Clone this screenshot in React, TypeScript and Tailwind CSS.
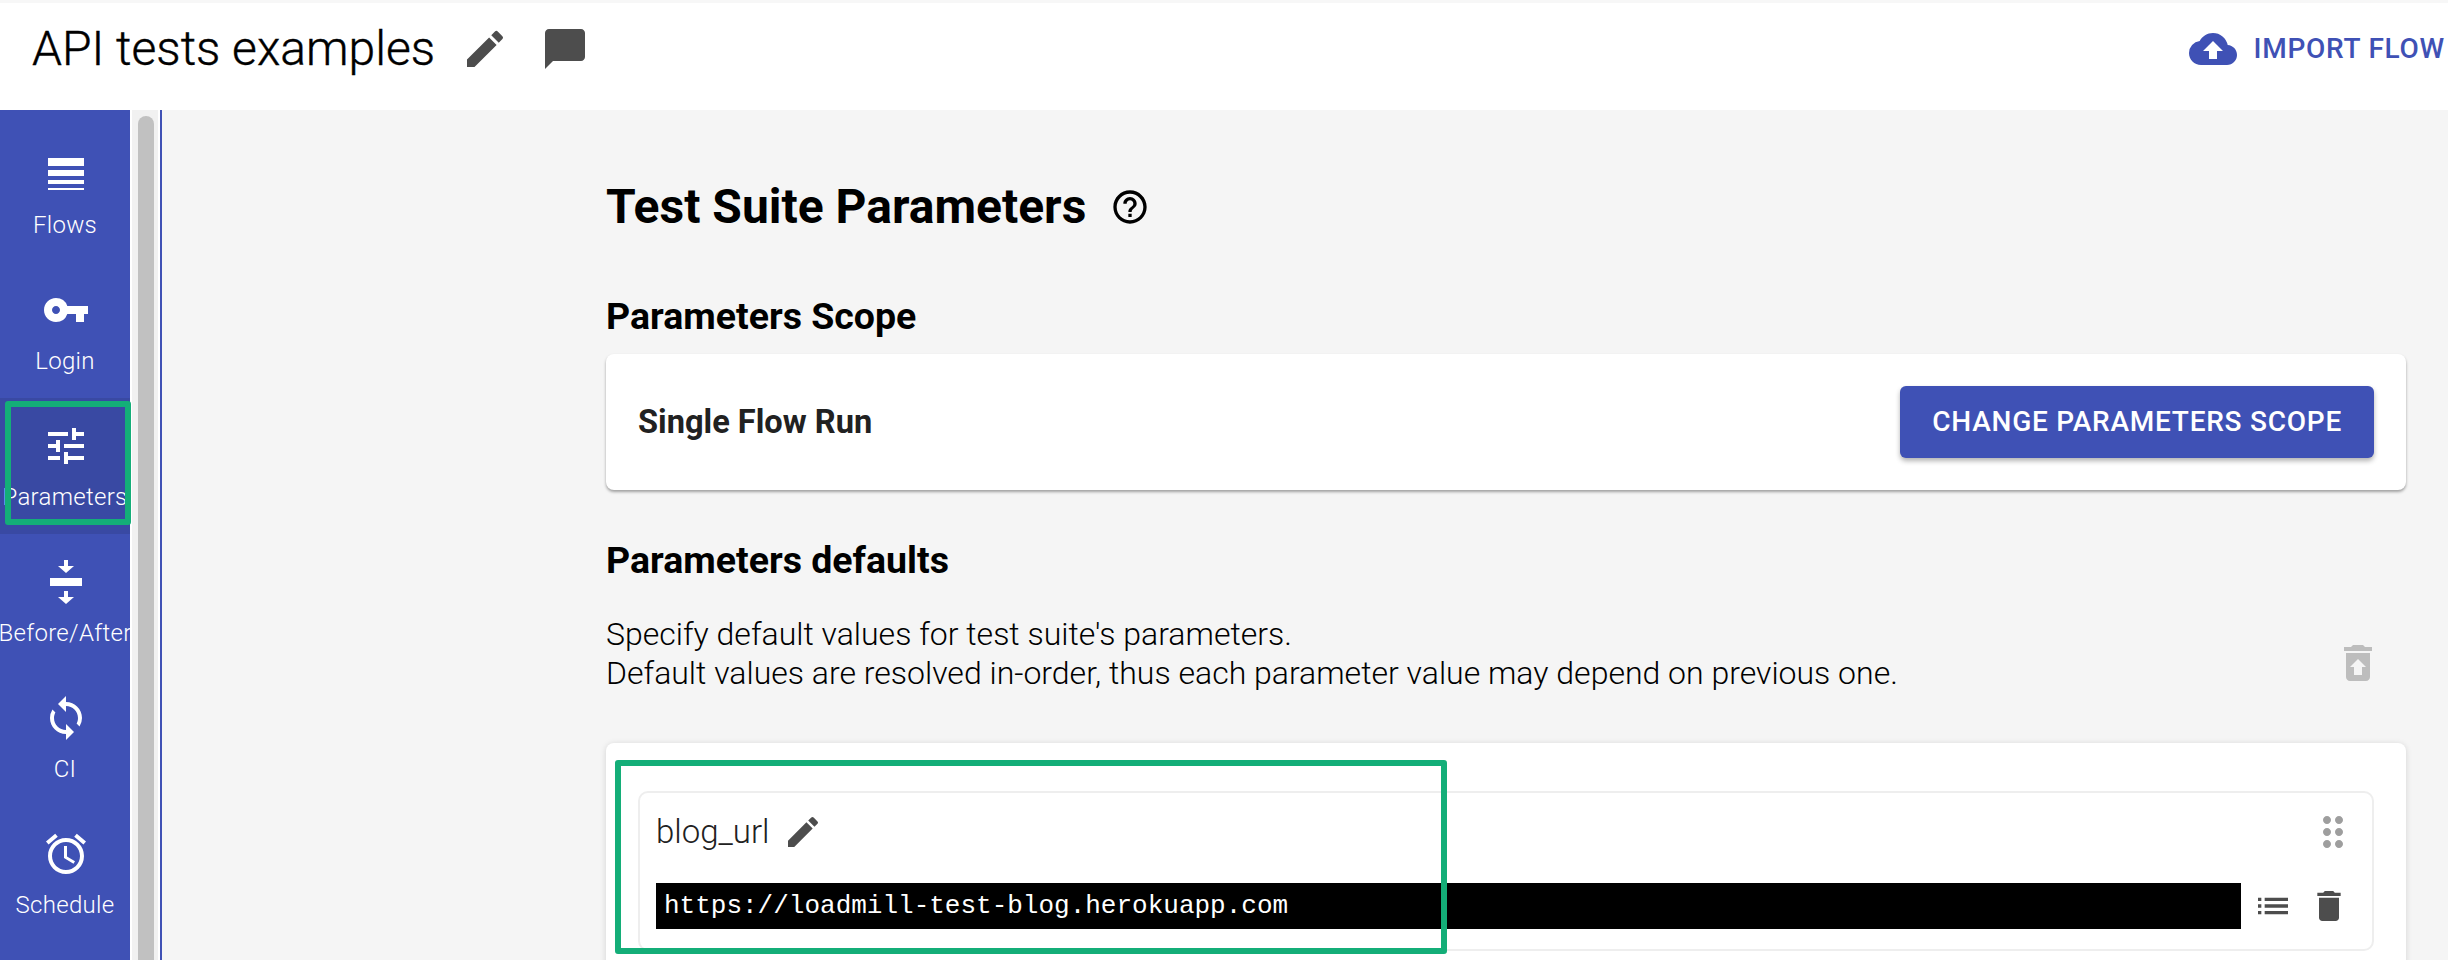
import type { ReactNode } from 'react';
import {
  MdAccessAlarm,
  MdChatBubble,
  MdCloudUpload,
  MdDelete,
  MdDragIndicator,
  MdEdit,
  MdHelpOutline,
  MdLineWeight,
  MdList,
  MdRestoreFromTrash,
  MdSync,
  MdTune,
  MdVpnKey,
} from 'react-icons/md';

function BeforeAfterIcon() {
  return (
    <svg viewBox="0 0 24 24" className="w-12 h-12 fill-white">
      <path d="M11 1h2v3h3l-4 3.5L8 4h3zM4 10h16v4H4zM11 16.5h2v3h3l-4 3.5-4-3.5h3z" />
    </svg>
  );
}

const navItems: { label: string; icon: ReactNode; active?: boolean }[] = [
  { label: 'Flows', icon: <MdLineWeight size={48} /> },
  { label: 'Login', icon: <MdVpnKey size={48} /> },
  { label: 'Parameters', icon: <MdTune size={48} />, active: true },
  { label: 'Before/After', icon: <BeforeAfterIcon /> },
  { label: 'CI', icon: <MdSync size={48} /> },
  { label: 'Schedule', icon: <MdAccessAlarm size={48} /> },
];

function Sidebar() {
  return (
    <nav className="relative w-[130px] shrink-0 bg-[#3f51b5] pt-4 text-white">
      {navItems.map((item) => (
        <div
          key={item.label}
          className={`flex h-[136px] flex-col items-center overflow-hidden pt-6 ${item.active ? 'bg-[#3949a3]' : ''}`}
        >
          <div className="h-12 w-12 shrink-0 translate-x-px">{item.icon}</div>
          <span className="mt-[11px] whitespace-nowrap text-[24px] leading-[32px] font-light tracking-[0.3px]">{item.label}</span>
        </div>
      ))}
      {/* Annotation around the active tab */}
      <div className="absolute left-[5px] top-[291px] h-[124px] w-[126px] rounded-[3px] border-[6px] border-[#14ae78]" />
    </nav>
  );
}

function ParameterCard() {
  return (
    <div className="relative mt-[50px] rounded-t-lg bg-white px-[32px] pt-[48px] pb-8 shadow-[0_1px_6px_rgba(0,0,0,0.14)]">
      <div className="rounded-[10px] border-2 border-[#eeeeee] pb-5 pl-4 pr-[23px]">
        <div className="flex h-[90px] items-center justify-between pb-3">
          <div className="flex items-center">
            <span className="text-[33px] font-light text-[#212121]">blog_url</span>
            <MdEdit size={40} className="ml-[14px] text-[#4d4d4d]" />
          </div>
          <MdDragIndicator size={48} className="-mr-[8px] text-[#9e9e9e]" />
        </div>
        <div className="flex items-center">
          <div className="flex h-[46px] flex-1 items-center bg-black pl-2 font-['Liberation_Mono',monospace] text-[26px] text-white">
            https://loadmill-test-blog.herokuapp.com
          </div>
          <MdList size={40} className="ml-3 text-[#4d4d4d]" />
          <MdDelete size={40} className="ml-4 text-[#4d4d4d]" />
        </div>
      </div>
      {/* Annotation around the parameter name and value */}
      <div className="absolute left-[9px] top-[17px] h-[194px] w-[832px] rounded-[3px] border-[6px] border-[#14ae78]" />
    </div>
  );
}

export default function App() {
  return (
    <div className="flex h-[960px] flex-col overflow-hidden bg-white font-['Roboto',sans-serif]">
      <header className="flex h-[110px] shrink-0 items-center justify-between border-t-[3px] border-[#f7f7f7] pb-4 pl-8 pr-[3px]">
        <div className="flex items-center">
          <h1 className="text-[48px] font-light text-black [-webkit-text-stroke:0.4px_black]">API tests examples</h1>
          <MdEdit size={48} className="ml-[26px] text-[#4d4d4d]" />
          <MdChatBubble size={48} className="ml-[32px] text-[#4d4d4d]" />
        </div>
        <div className="flex items-center text-[#3f51b5]">
          <MdCloudUpload size={48} />
          <span className="ml-[17px] text-[28px] font-medium tracking-[0.75px]">IMPORT FLOW</span>
        </div>
      </header>

      <div className="flex min-h-0 flex-1">
        <Sidebar />
        {/* Scrollbar of the sidebar */}
        <div className="w-[30px] shrink-0 bg-white px-[2px]">
          <div className="h-full w-[26px] bg-[#f1f1f1] pl-[6px] pt-[6px]">
            <div className="h-full w-4 rounded-t-lg bg-[#c1c1c1]" />
          </div>
        </div>
        <main className="flex-1 border-l-2 border-[#3f51b5] bg-[#f5f5f5] pl-[444px] pt-[57px]">
          <div className="w-[1800px]">
            <div className="flex items-center">
              <h2 className="text-[48px] leading-[80px] font-bold text-black">Test Suite Parameters</h2>
              <MdHelpOutline size={40} className="ml-[24px] text-black" />
            </div>

            <h3 className="mt-[49px] text-[37.5px] leading-[40px] font-bold text-black">Parameters Scope</h3>
            <div className="mt-[18px] flex h-[136px] items-center justify-between rounded-lg bg-white pl-8 pr-8 shadow-[0_2px_3px_rgba(0,0,0,0.35)]">
              <span className="text-[32.6px] font-bold text-[#212121]">Single Flow Run</span>
              <button className="h-[72px] rounded-md bg-[#3f51b5] px-8 text-[28px] font-medium tracking-[0.75px] text-white shadow-[0_3px_5px_rgba(0,0,0,0.3)]">
                CHANGE PARAMETERS SCOPE
              </button>
            </div>

            <h3 className="mt-[50px] text-[37.5px] leading-[40px] font-bold text-black">Parameters defaults</h3>
            <div className="mt-[35px] flex items-center justify-between pr-[24px]">
              <p className="text-[32px] leading-[39px] font-light text-black">
                Specify default values for test suite's parameters.
                <br />
                Default values are resolved in-order, thus each parameter value may depend on previous one.
              </p>
              <MdRestoreFromTrash size={48} className="mt-[18px] text-[#bdbdbd]" />
            </div>

            <ParameterCard />
          </div>
        </main>
      </div>
    </div>
  );
}
